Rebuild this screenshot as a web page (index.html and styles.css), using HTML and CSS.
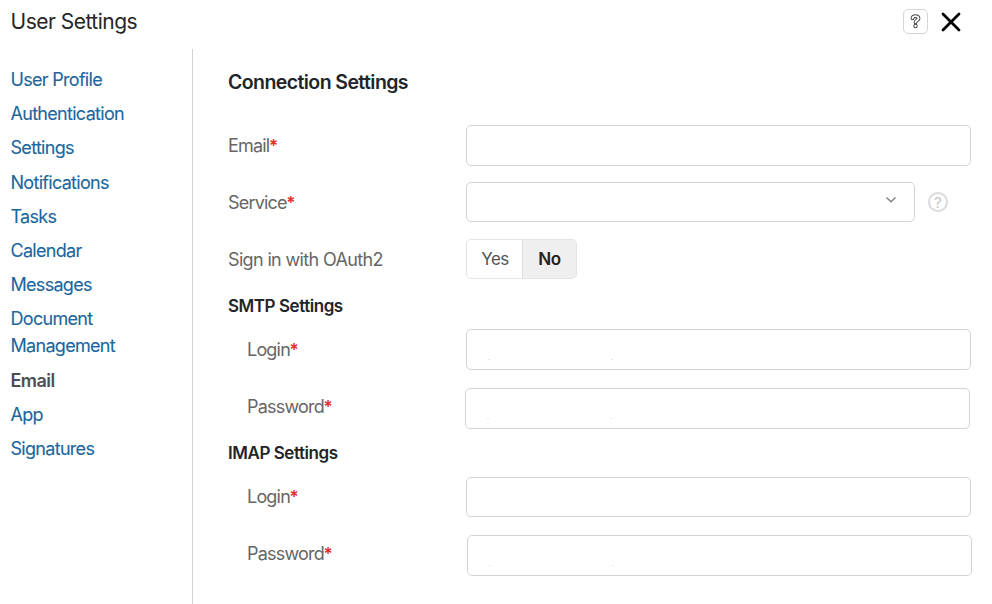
FILE: index.html
```html
<!DOCTYPE html>
<html lang="en">
<head>
<meta charset="utf-8">
<title>User Settings</title>
<link rel="stylesheet" href="styles.css">
</head>
<body>
<header class="topbar">
  <h1 class="page-title">User Settings</h1>
  <button class="help-btn" type="button" aria-label="Help">
    <svg width="11" height="15" viewBox="0 0 11 15" fill="none" stroke-linecap="round" stroke-linejoin="round">
      <g stroke="#444" stroke-width="3.800"><path d="M2.500 4.300C2.700 1.400 8.500 1.300 8.500 4.400 8.500 6.400 5.500 6.300 5.500 8.300"/><path d="M5.500 11.900v.1" stroke-width="4.400"/></g>
      <g stroke="#fff" stroke-width="1.900"><path d="M2.500 4.300C2.700 1.400 8.500 1.300 8.500 4.400 8.500 6.400 5.500 6.300 5.500 8.300"/><path d="M5.500 11.900v.1" stroke-width="2.400"/></g>
    </svg>
  </button>
  <button class="close-btn" type="button" aria-label="Close">
    <svg width="20" height="20" viewBox="0 0 20 20" fill="none" stroke="#000" stroke-width="2.800" stroke-linecap="round"><path d="M2 2l16 16M18 2L2 18"/></svg>
  </button>
</header>
<div class="layout">
  <nav class="sidebar">
    <a class="nav-link">User Profile</a>
    <a class="nav-link">Authentication</a>
    <a class="nav-link">Settings</a>
    <a class="nav-link">Notifications</a>
    <a class="nav-link">Tasks</a>
    <a class="nav-link">Calendar</a>
    <a class="nav-link">Messages</a>
    <a class="nav-link">Document<br>Management</a>
    <a class="nav-link active">Email</a>
    <a class="nav-link">App</a>
    <a class="nav-link">Signatures</a>
  </nav>
  <main class="content">
    <h2 class="section-title">Connection Settings</h2>
    <div class="row"><label class="label">Email<b class="req">*</b></label><div class="field"></div></div>
    <div class="row"><label class="label">Service<b class="req">*</b></label>
      <div class="field select"><svg width="12" height="8" viewBox="0 0 12 8" fill="none" stroke="#808080" stroke-width="1.400"><path d="M1.500 1.500L6 5.800l4.500-4.300"/></svg></div>
      <div class="hint">?</div>
    </div>
    <div class="row"><label class="label oauth">Sign in with OAuth2</label>
      <div class="toggle"><span class="option">Yes</span><span class="option selected">No</span></div>
    </div>
    <h3 class="group-title">SMTP Settings</h3>
    <div class="row nested"><label class="label">Login<b class="req">*</b></label><div class="field marked"></div></div>
    <div class="row nested"><label class="label">Password<b class="req">*</b></label><div class="field marked smtp-password"></div></div>
    <h3 class="group-title">IMAP Settings</h3>
    <div class="row nested"><label class="label">Login<b class="req">*</b></label><div class="field imap-login"></div></div>
    <div class="row nested"><label class="label">Password<b class="req">*</b></label><div class="field marked imap-password"></div></div>
  </main>
</div>
</body>
</html>
```
FILE: styles.css
```css
* { box-sizing: border-box; }
body { margin: 0; height: 604px; overflow: hidden; background: #fff; font-family: Inter, sans-serif; font-size: 18px; letter-spacing: -0.7px; color: #666; }
h1, h2, h3 { margin: 0; }
button { padding: 0; background: none; border: 0; }
.topbar { display: flex; height: 49px; padding: 9px 31px 0 10.500px; align-items: flex-start; }
.page-title { flex: 1; font-size: 21px; font-weight: 400; line-height: 25px; letter-spacing: -0.500px; color: #262626; }
.help-btn { width: 25px; height: 25px; border: 1px solid #d5d5d5; border-radius: 5px; display: grid; place-items: center; margin-right: 13px; }
.close-btn { display: grid; margin-top: 3px; }
.layout { display: flex; height: 555px; }
.sidebar { width: 193px; border-right: 1px solid #d2d3d4; padding: 17px 0 0 10.500px; display: flex; flex-direction: column; gap: 7.200px; }
.nav-link { line-height: 27px; color: #20669c; -webkit-text-stroke: 0.1px; }
.active { color: #4b4f54; font-weight: 600; letter-spacing: -0.550px; -webkit-text-stroke: 0; }
.content { flex: 1; padding-left: 35px; }
.section-title { height: 68px; line-height: 67px; font-size: 19.500px; font-weight: 600; letter-spacing: -0.580px; color: #212529; }
.row { height: 57px; display: flex; align-items: center; }
.label { flex: none; width: 238px; letter-spacing: -0.800px; }
.oauth { letter-spacing: -0.650px; }
.nested .label { padding-left: 19px; }
.req { color: #e5302a; font-weight: 600; font-size: 17px; margin-left: -0.500px; }
.field { flex: none; width: 505px; height: 41px; border: 1px solid #d4d4d4; border-radius: 5px; }
.select { width: 449px; height: 40px; display: flex; justify-content: flex-end; padding: 13px 17px; margin-top: -1px; }
.marked {
  background-image: linear-gradient(#e8e8e8, #e8e8e8), linear-gradient(#e8e8e8, #e8e8e8);
  background-size: 2px 1px;
  background-position: 21px 29px, 144px 29px;
  background-repeat: no-repeat;
}
.smtp-password { margin: 4px 0 0 -1px; }
.imap-login { height: 40px; margin-top: 1px; }
.imap-password { margin: 4px 0 0 1px; }
.hint { margin: -1px 0 0 13px; width: 20px; height: 20px; border: 2px solid #dadada; border-radius: 50%; font-size: 15px; font-weight: 500; letter-spacing: 0; line-height: 17px; text-align: center; color: #ccc; }
.toggle { display: flex; width: 111px; height: 40px; margin-top: -1px; border: 1px solid #e4e4e4; border-radius: 5px; overflow: hidden; font-size: 17px; line-height: 39px; letter-spacing: -0.500px; text-align: center; }
.option { width: 55px; padding-left: 1px; color: #555; }
.selected { flex: 1; padding-left: 0; border-left: 1px solid #e0e0e0; background: #efefef; color: #222; font-weight: 600; }
.group-title { height: 33px; padding-top: 3px; line-height: 30px; font-size: 17px; font-weight: 600; letter-spacing: -0.450px; color: #212529; }
```
